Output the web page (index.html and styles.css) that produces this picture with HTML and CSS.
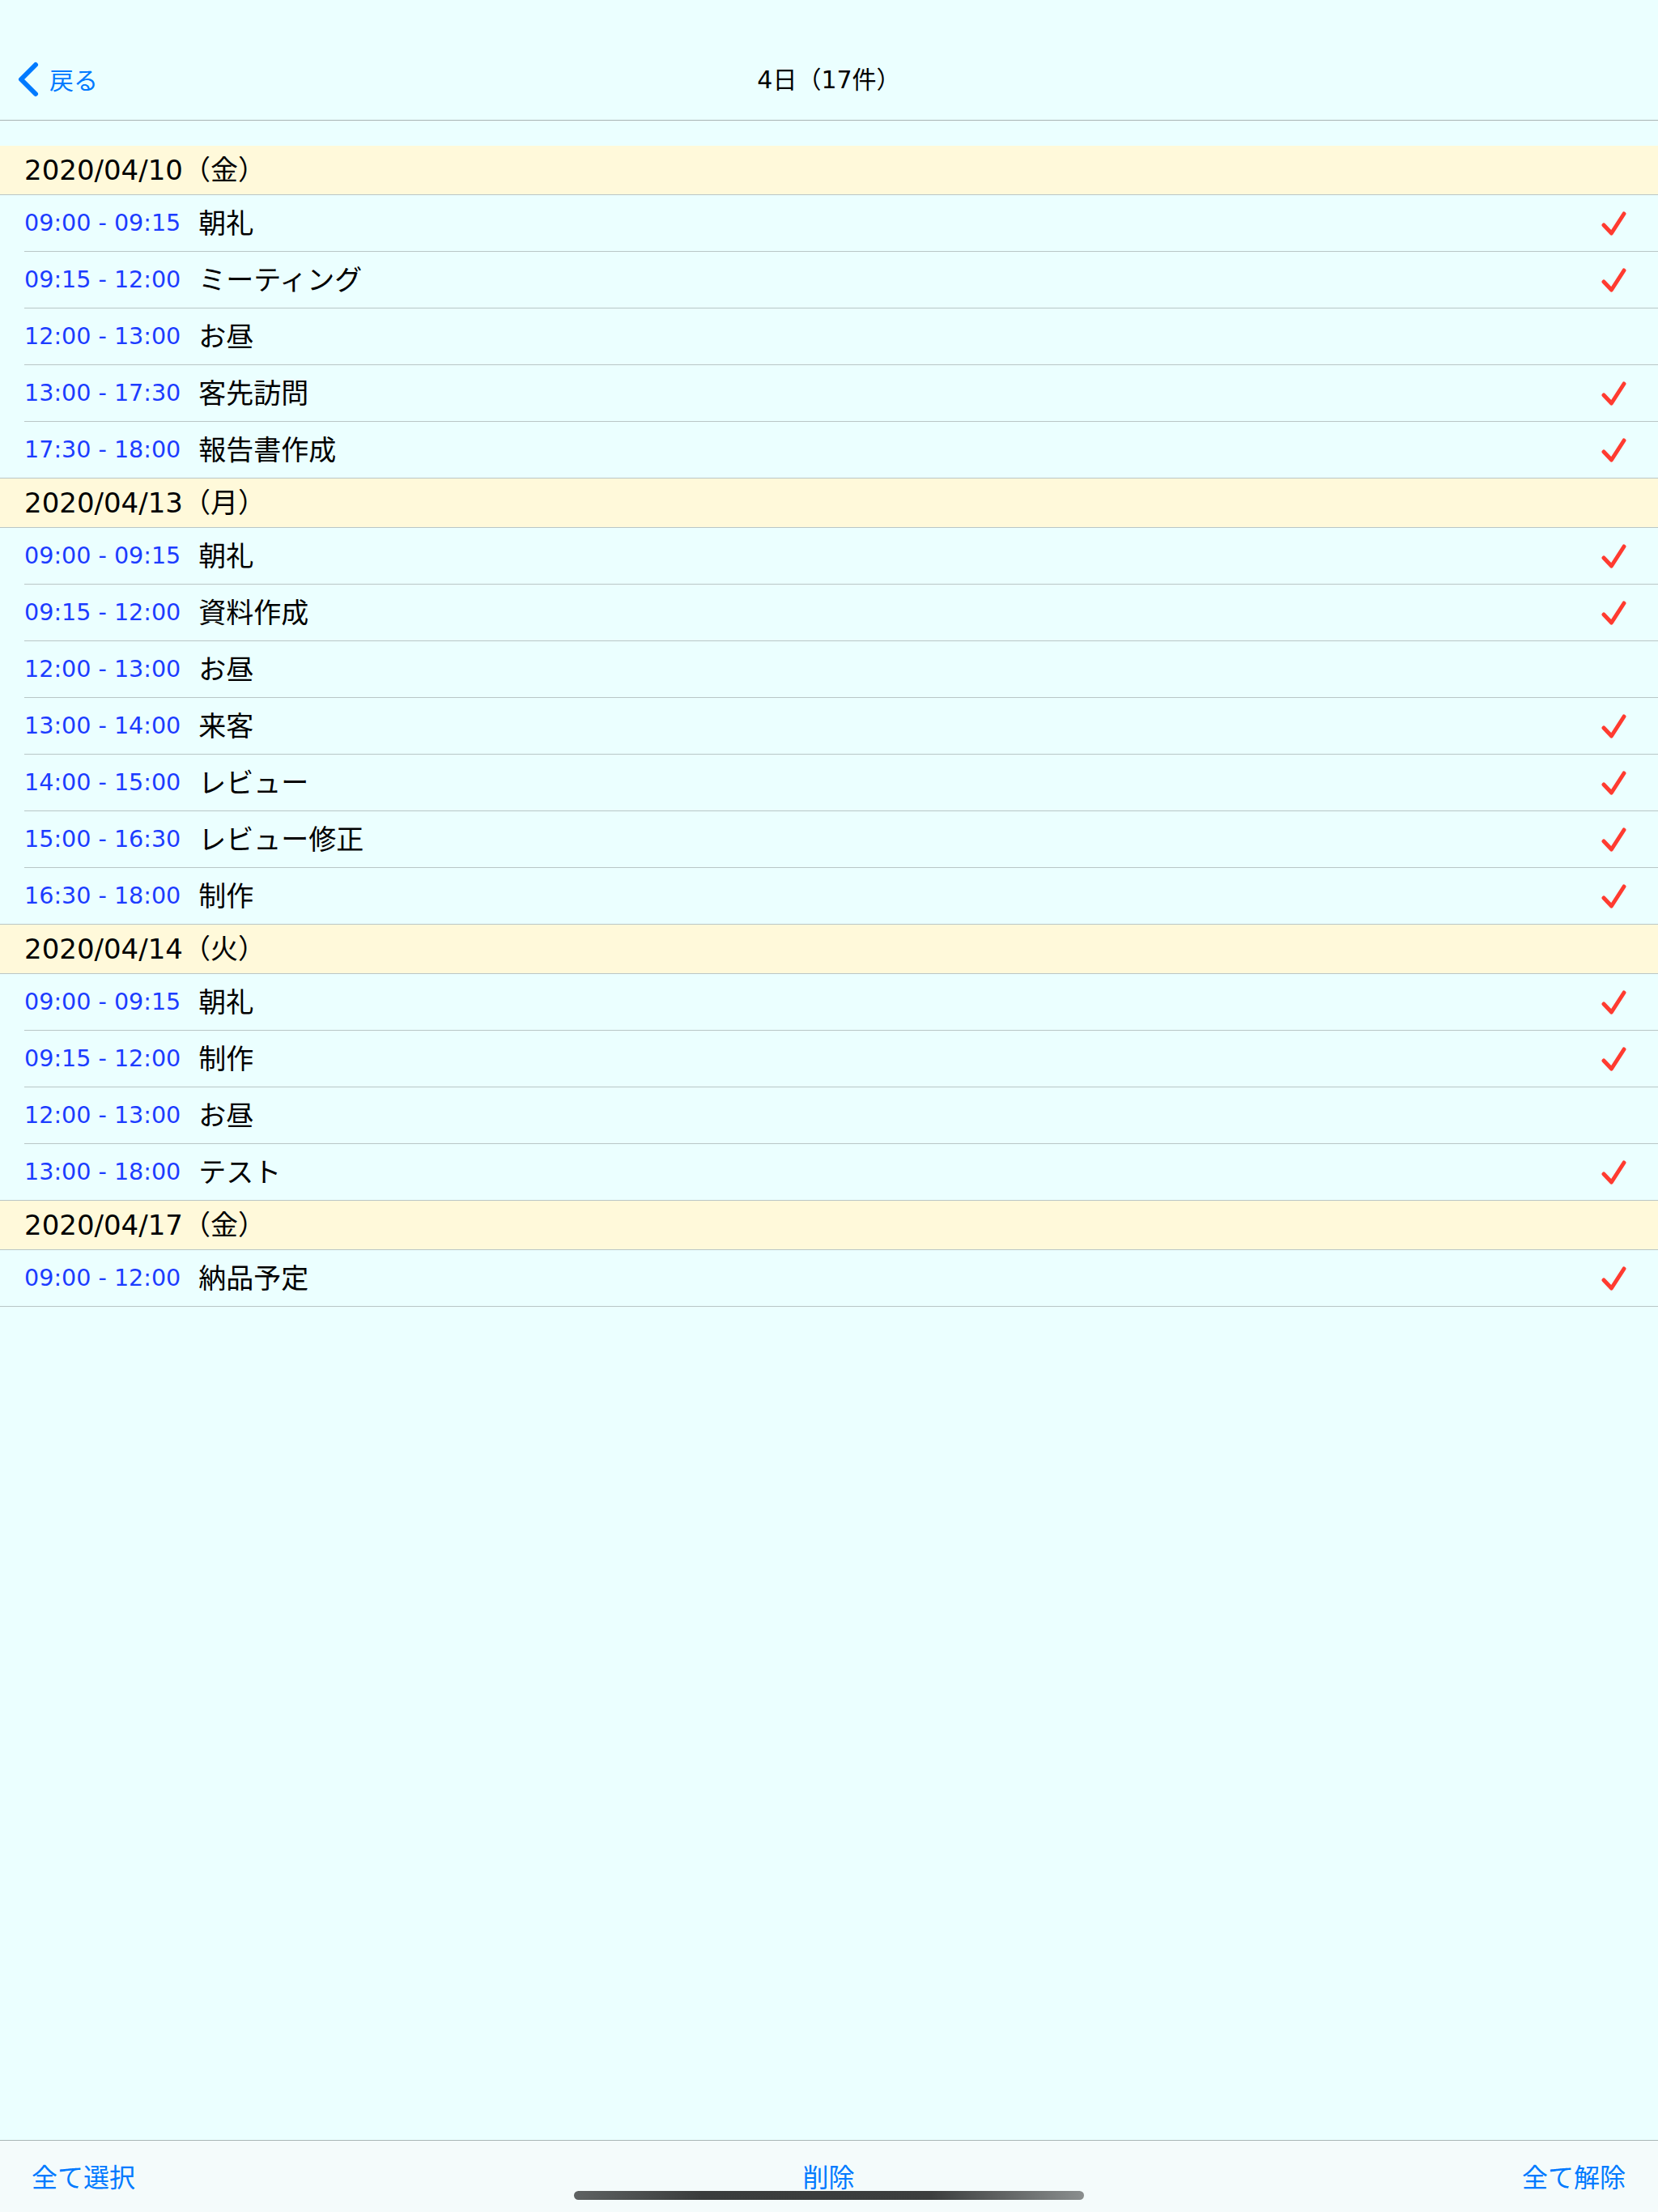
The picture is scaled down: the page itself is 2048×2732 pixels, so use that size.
FILE: index.html
```html
<!DOCTYPE html>
<html lang="ja">
<head>
<meta charset="utf-8">
<title>4日（17件）</title>
<link rel="stylesheet" href="styles.css">
</head>
<body>
<svg class="defs" width="0" height="0" aria-hidden="true">
  <symbol id="chk" viewBox="0 0 32 32">
    <path d="M4 18 L13.5 28 L29 4" fill="none" stroke="#FF3B30" stroke-width="5" stroke-linecap="round" stroke-linejoin="round"/>
  </symbol>
</svg>
<div class="app">
  <header class="nav">
    <div class="nav-left">
      <svg class="chev" width="30" height="48" viewBox="0 0 30 48"><polyline points="22,5 4,23 22,41" fill="none" stroke="#007AFF" stroke-width="6" stroke-linecap="round" stroke-linejoin="round"/></svg>
      <span class="back">戻る</span>
    </div>
    <div class="nav-title">4日（17件）</div>
    <div class="nav-right"></div>
  </header>

  <main class="list">
    <section class="group">
      <div class="day">2020/04/10（金）</div>
      <ul class="rows">
        <li class="row"><span class="time">09:00 - 09:15</span><span class="title">朝礼</span><svg class="check"><use href="#chk"/></svg></li>
        <li class="row"><span class="time">09:15 - 12:00</span><span class="title">ミーティング</span><svg class="check"><use href="#chk"/></svg></li>
        <li class="row"><span class="time">12:00 - 13:00</span><span class="title">お昼</span></li>
        <li class="row"><span class="time">13:00 - 17:30</span><span class="title">客先訪問</span><svg class="check"><use href="#chk"/></svg></li>
        <li class="row"><span class="time">17:30 - 18:00</span><span class="title">報告書作成</span><svg class="check"><use href="#chk"/></svg></li>
      </ul>
    </section>
    <section class="group">
      <div class="day">2020/04/13（月）</div>
      <ul class="rows">
        <li class="row"><span class="time">09:00 - 09:15</span><span class="title">朝礼</span><svg class="check"><use href="#chk"/></svg></li>
        <li class="row"><span class="time">09:15 - 12:00</span><span class="title">資料作成</span><svg class="check"><use href="#chk"/></svg></li>
        <li class="row"><span class="time">12:00 - 13:00</span><span class="title">お昼</span></li>
        <li class="row"><span class="time">13:00 - 14:00</span><span class="title">来客</span><svg class="check"><use href="#chk"/></svg></li>
        <li class="row"><span class="time">14:00 - 15:00</span><span class="title">レビュー</span><svg class="check"><use href="#chk"/></svg></li>
        <li class="row"><span class="time">15:00 - 16:30</span><span class="title">レビュー修正</span><svg class="check"><use href="#chk"/></svg></li>
        <li class="row"><span class="time">16:30 - 18:00</span><span class="title">制作</span><svg class="check"><use href="#chk"/></svg></li>
      </ul>
    </section>
    <section class="group">
      <div class="day">2020/04/14（火）</div>
      <ul class="rows">
        <li class="row"><span class="time">09:00 - 09:15</span><span class="title">朝礼</span><svg class="check"><use href="#chk"/></svg></li>
        <li class="row"><span class="time">09:15 - 12:00</span><span class="title">制作</span><svg class="check"><use href="#chk"/></svg></li>
        <li class="row"><span class="time">12:00 - 13:00</span><span class="title">お昼</span></li>
        <li class="row"><span class="time">13:00 - 18:00</span><span class="title">テスト</span><svg class="check"><use href="#chk"/></svg></li>
      </ul>
    </section>
    <section class="group">
      <div class="day">2020/04/17（金）</div>
      <ul class="rows">
        <li class="row"><span class="time">09:00 - 12:00</span><span class="title">納品予定</span><svg class="check"><use href="#chk"/></svg></li>
      </ul>
    </section>
  </main>

  <footer class="toolbar">
    <span class="tool">全て選択</span>
    <span class="tool">削除</span>
    <span class="tool">全て解除</span>
    <div class="home"></div>
  </footer>
</div>
</body>
</html>
```

FILE: styles.css
```css
* { box-sizing: border-box; }
html, body { margin: 0; padding: 0; }
body {
  background: #EBFFFF;
  font-family: "DejaVu Sans", "Noto Sans CJK JP", sans-serif;
  color: #000;
}
.defs { position: absolute; width: 0; height: 0; overflow: hidden; }

.app {
  height: 2732px;
  display: flex;
  flex-direction: column;
}

/* nav bar */
.nav {
  height: 149px;
  padding-top: 48px;
  border-bottom: 1px solid #AAB3B3;
  display: grid;
  grid-template-columns: 1fr auto 1fr;
  align-items: center;
}
.nav-left {
  display: flex;
  align-items: center;
  padding-left: 22px;
}
.chev { display: block; margin-top: 2px; }
.back {
  font-family: "Noto Sans CJK JP", sans-serif;
  font-size: 30px;
  line-height: 1;
  color: #007AFF;
  margin-left: 9px;
  margin-bottom: 2px;
}
.nav-title {
  font-size: 30px;
  line-height: 1;
  font-family: "DejaVu Sans", "Noto Sans CJK JP", sans-serif;
  margin-top: 2px;
}

/* list */
.list {
  flex: 1;
  padding-top: 31px;
}
.group { margin: 0; }
.day {
  height: 61px;
  border-bottom: 1px solid #B9C6C6;
  background: #FFF9DA;
  padding-left: 30px;
  display: flex;
  align-items: center;
  font-size: 34px;
  line-height: 1;
}
.rows { list-style: none; margin: 0; padding: 0; }
.row {
  height: 70px;
  margin-left: 30px;
  border-bottom: 1px solid #B9C6C6;
  display: flex;
  align-items: center;
}
.row:last-child {
  margin-left: 0;
  padding-left: 30px;
}
.time {
  font-family: "DejaVu Sans", sans-serif;
  font-size: 28.6px;
  line-height: 1;
  color: #1C3CFF;
}
.title {
  font-family: "Noto Sans CJK JP", sans-serif;
  font-size: 34px;
  line-height: 1.2;
  margin-left: 22px;
  margin-bottom: 3px;
}
.check {
  width: 32px;
  height: 32px;
  margin-left: auto;
  margin-right: 39px;
  margin-top: 1px;
}

/* toolbar */
.toolbar {
  position: relative;
  height: 89px;
  border-top: 1px solid #A9B6B6;
  background: #F4FBFB;
  display: flex;
  justify-content: space-between;
  align-items: center;
  padding: 0 40px 2px 39px;
}
.tool {
  font-family: "Noto Sans CJK JP", sans-serif;
  font-size: 32px;
  line-height: 1;
  color: #007AFF;
}
.home {
  position: absolute;
  left: 709px;
  bottom: 15px;
  width: 630px;
  height: 11px;
  border-radius: 6px;
  background: linear-gradient(90deg, #5e6262 0%, #3a3c3c 25%, #3c3e3e 70%, #8a8e8e 100%);
}
```
